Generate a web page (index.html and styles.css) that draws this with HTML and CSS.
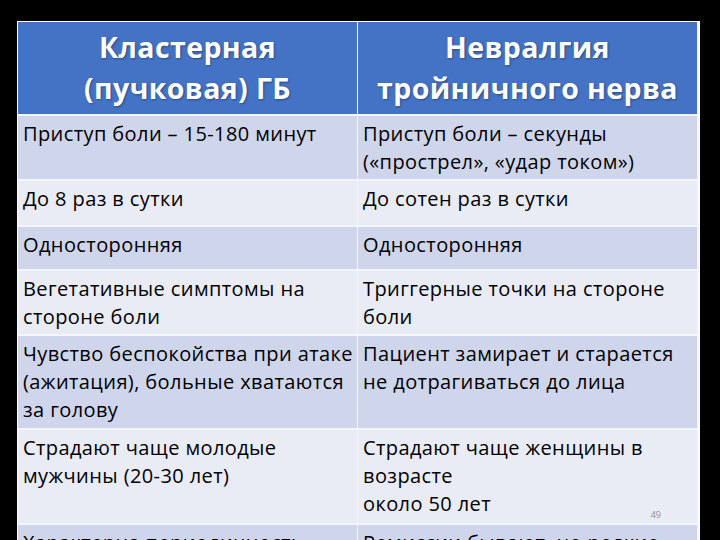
FILE: index.html
```html
<!DOCTYPE html>
<html lang="ru">
<head>
<meta charset="utf-8">
<link rel="stylesheet" href="styles.css">
</head>
<body>
<div class="slide">
  <div class="table">
    <div class="cell head">Кластерная<br>(пучковая) ГБ</div>
    <div class="cell head">Невралгия<br>тройничного нерва</div>

    <div class="cell dark">Приступ боли – 15-180 минут</div>
    <div class="cell dark">Приступ боли – секунды<br>(«прострел», «удар током»)</div>

    <div class="cell light">До 8 раз в сутки</div>
    <div class="cell light">До сотен раз в сутки</div>

    <div class="cell dark">Односторонняя</div>
    <div class="cell dark">Односторонняя</div>

    <div class="cell light">Вегетативные симптомы на<br>стороне боли</div>
    <div class="cell light">Триггерные точки на стороне<br>боли</div>

    <div class="cell dark">Чувство беспокойства при атаке<br>(ажитация), больные хватаются<br>за голову</div>
    <div class="cell dark">Пациент замирает и старается<br>не дотрагиваться до лица</div>

    <div class="cell light">Страдают чаще молодые<br>мужчины (20-30 лет)</div>
    <div class="cell light numbered">Страдают чаще женщины в<br>возрасте<br>около 50 лет<span class="pagenum">49</span></div>

    <div class="cell dark">Характерна периодичность</div>
    <div class="cell dark">Ремиссии бывают, но редкие</div>
  </div>
</div>
</body>
</html>
```

FILE: styles.css
```css
html, body {
  margin: 0;
  padding: 0;
  background: #000;
}
.slide {
  width: 720px;
  height: 540px;
  overflow: hidden;
  background: #000;
  padding: 21px 0 0 17px;
  box-sizing: border-box;
}
.table {
  width: 681px;
  display: grid;
  grid-template-columns: 339px 339px;
  grid-template-rows: 92px 63px 44px 42px 63px 92px 93px 60px;
  column-gap: 1px;
  row-gap: 2px;
  background: #f4f6fb;
  border: 1px solid #ffffff;
  border-bottom: none;
  font-family: "Open Sans", "DejaVu Sans", sans-serif;
}
.cell {
  box-sizing: border-box;
  padding: 4px 5px 0 5px;
  font-size: 20px;
  line-height: 28px;
  color: #000;
  letter-spacing: 0.4px;
  white-space: nowrap;
}
.head {
  background: #4472c4;
  color: #fff;
  font-weight: bold;
  font-size: 28.5px;
  line-height: 41px;
  text-align: center;
  padding: 5px 0 0 0;
  letter-spacing: 0.4px;
  text-shadow: 1px 1px 2px rgba(0, 0, 0, 0.35);
}
.dark {
  background: #cfd5ea;
}
.light {
  background: #e9ebf5;
}
.numbered {
  position: relative;
}
.pagenum {
  position: absolute;
  right: 36px;
  bottom: 3px;
  font-size: 9px;
  line-height: 10px;
  color: #8a8f9c;
  letter-spacing: 0;
}
```
